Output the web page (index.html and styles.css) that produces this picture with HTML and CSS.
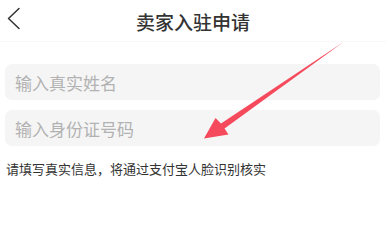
FILE: index.html
```html
<!DOCTYPE html>
<html lang="zh-CN">
<head>
<meta charset="utf-8">
<link rel="stylesheet" href="styles.css">
<title>卖家入驻申请</title>
</head>
<body>
<div class="page">
  <header class="nav">
    <div class="nav-left">
      <svg class="back" width="14" height="24" viewBox="0 0 14 24"><path d="M12 1.5 L1.5 11.5 L12 21.5" fill="none" stroke="#333" stroke-width="1.5" stroke-linecap="round" stroke-linejoin="round"/></svg>
    </div>
    <h1 class="title">卖家入驻申请</h1>
    <div class="nav-right"></div>
  </header>
  <main class="form">
    <input class="field" type="text" placeholder="输入真实姓名">
    <input class="field" type="text" placeholder="输入身份证号码">
    <p class="hint">请填写真实信息，将通过支付宝人脸识别核实</p>
  </main>
  <svg class="arrow" width="386" height="216" viewBox="0 0 386 216"><polygon points="204,138.5 215.5,118 221,123.5 343.5,42 224.5,128.5 228.5,134.5" fill="#f44a5b"/></svg>
</div>
</body>
</html>
```
FILE: styles.css
```css
html, body {
  margin: 0;
  padding: 0;
  background: #fff;
}
body {
  font-family: "Noto Sans CJK SC", "Noto Sans", sans-serif;
  color: #333;
}
.page {
  position: relative;
  width: 386px;
  height: 216px;
  overflow: hidden;
}
.nav {
  display: grid;
  grid-template-columns: 1fr auto 1fr;
  align-items: center;
  height: 42px;
  border-bottom: 1px solid #f8f8f8;
  box-sizing: border-box;
}
.nav-left {
  display: flex;
  align-items: center;
  padding-left: 7px;
  padding-bottom: 3px;
}
.back { display: block; }
.title {
  margin: 0;
  padding-top: 2px;
  font-size: 19px;
  font-weight: 500;
  line-height: 24px;
  color: #333;
}
.form {
  display: flex;
  flex-direction: column;
  gap: 10px;
  padding: 22px 6px 0 5px;
}
.field {
  height: 36px;
  box-sizing: border-box;
  border: none;
  outline: none;
  border-radius: 7px;
  background: #f5f5f5;
  padding: 0 0 0 10px;
  margin: 0;
  font-family: "Noto Sans CJK SC", sans-serif;
  font-size: 17px;
  color: #333;
}
.field::placeholder {
  color: #b2b2b2;
}
.hint {
  margin: 4px 0 0 1px;
  font-size: 13px;
  line-height: 18px;
  color: #333;
}
.arrow {
  position: absolute;
  left: 0;
  top: 0;
  pointer-events: none;
}
```
